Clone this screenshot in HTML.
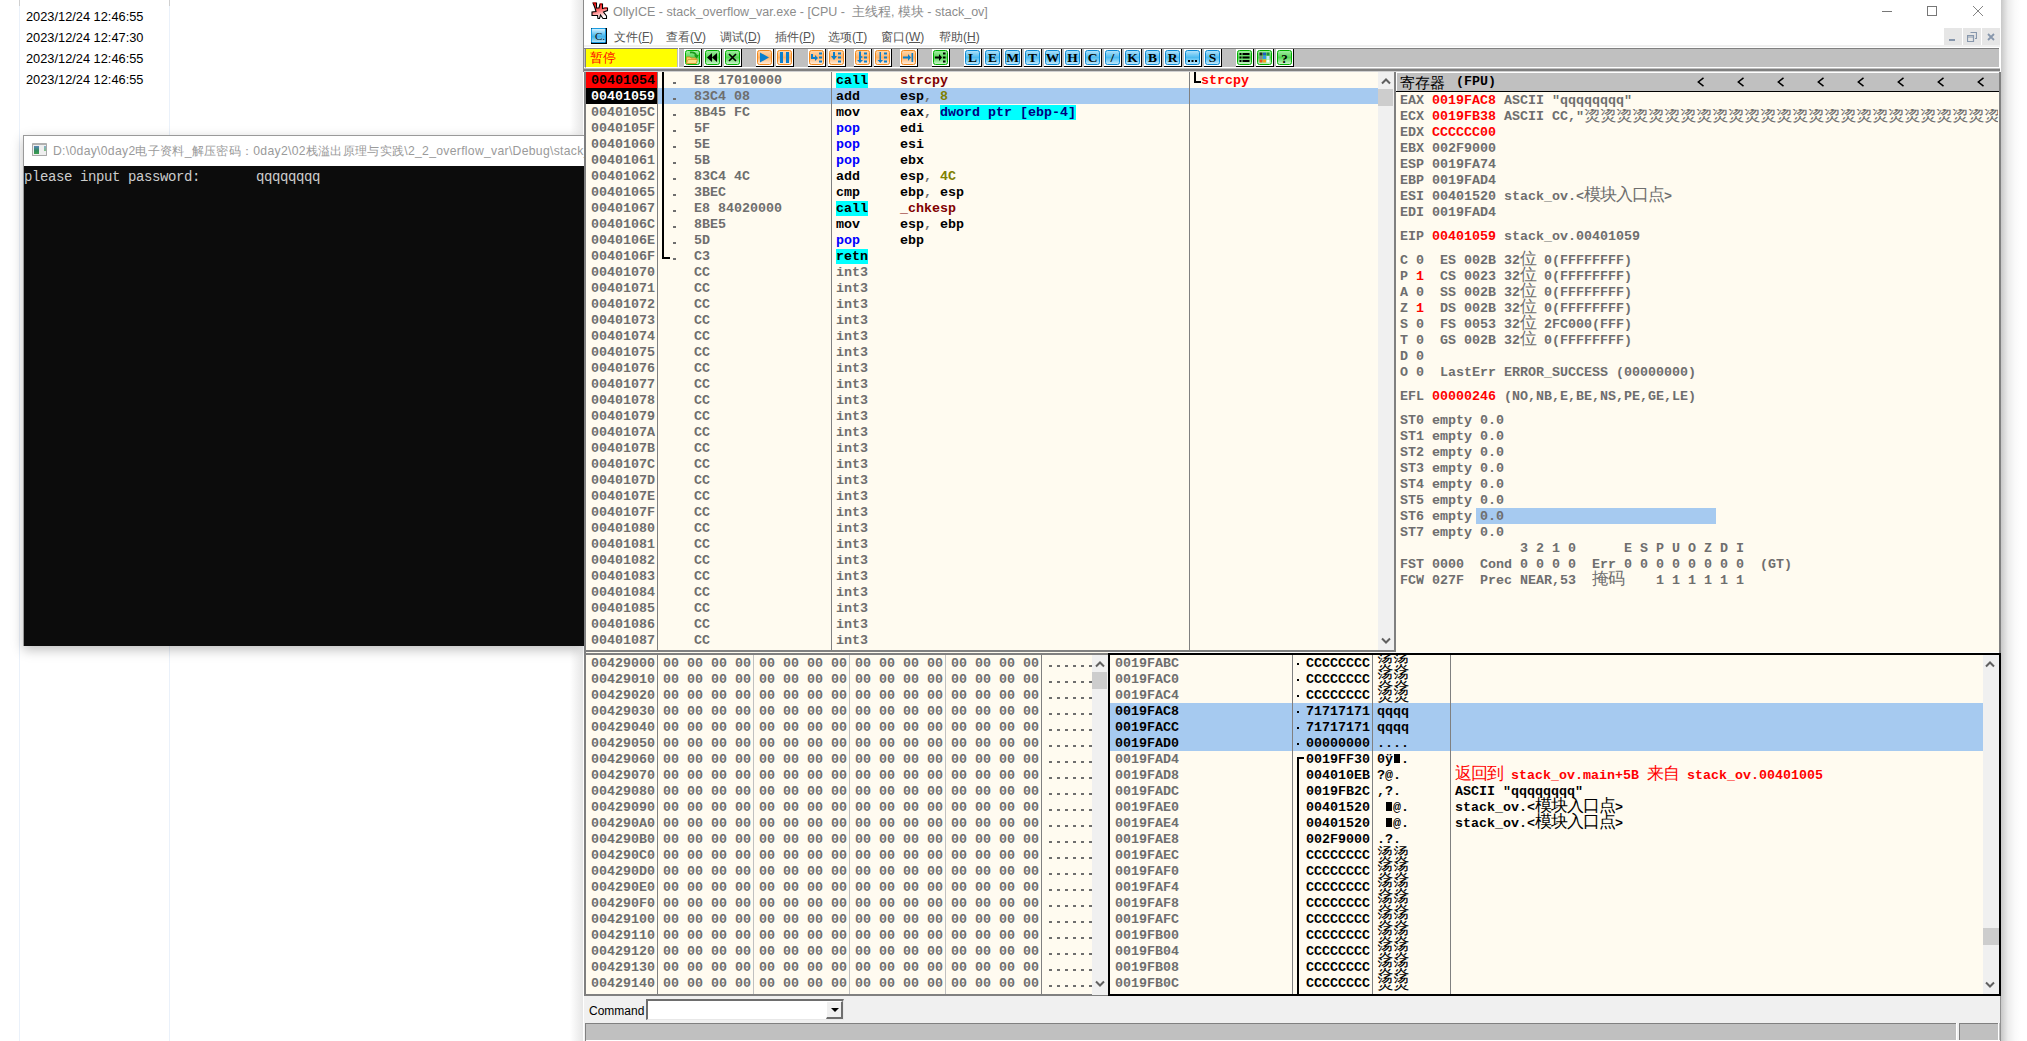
<!DOCTYPE html><html><head><meta charset="utf-8"><style>
html,body{margin:0;padding:0;}
body{width:2027px;height:1041px;position:relative;overflow:hidden;background:#fff;}
.r{position:absolute;}
.t{position:absolute;white-space:pre;line-height:16px;}
.m{font-family:'Liberation Mono',monospace;font-weight:bold;font-size:13.33px;line-height:16px;white-space:pre;}
.cj{font-weight:normal;font-family:'Liberation Sans',sans-serif;font-size:17px;letter-spacing:-1px;line-height:1px;}
</style></head><body>
<div class="r" style="left:19px;top:0px;width:1px;height:1041px;background:#EAF1FA;"></div><div class="r" style="left:19px;top:0px;width:1px;height:6px;background:#D0D0D0;"></div><div class="r" style="left:169px;top:0px;width:1px;height:1041px;background:#EAF1FA;"></div><div class="r" style="left:169px;top:0px;width:1px;height:6px;background:#D0D0D0;"></div><div class="t" style="left:26px;top:9px;font:12.8px 'Liberation Sans', sans-serif;line-height:16px;color:#000">2023/12/24 12:46:55</div><div class="t" style="left:26px;top:30px;font:12.8px 'Liberation Sans', sans-serif;line-height:16px;color:#000">2023/12/24 12:47:30</div><div class="t" style="left:26px;top:51px;font:12.8px 'Liberation Sans', sans-serif;line-height:16px;color:#000">2023/12/24 12:46:55</div><div class="t" style="left:26px;top:72px;font:12.8px 'Liberation Sans', sans-serif;line-height:16px;color:#000">2023/12/24 12:46:55</div><div class="r" style="left:23px;top:135px;width:561px;height:511px;background:#fff;box-shadow:0 4px 11px rgba(0,0,0,0.25);"></div><div class="r" style="left:23px;top:135px;width:561px;height:1px;background:#9a9a9a;"></div><div class="r" style="left:23px;top:135px;width:1px;height:511px;background:#9a9a9a;"></div><div class="r" style="left:32px;top:143px;width:15px;height:13px;background:#eeeeee;border:1px solid #a8a8a8;border-top:2px solid #b0b0b0;border-radius:1px;box-sizing:border-box;"></div><div class="r" style="left:34px;top:146px;width:5px;height:8px;background:linear-gradient(#5a86b8,#2f8a5a 60%,#3fa050)"></div><div class="r" style="left:44px;top:146px;width:2px;height:5px;background:linear-gradient(#8aaed0,#80c080)"></div><div class="t" style="left:53px;top:143px;font:12.2px 'Liberation Sans', sans-serif;letter-spacing:0.3px;line-height:16px;color:#9a9a9a">D:\0day\0day2电子资料_解压密码：0day2\02栈溢出原理与实践\2_2_overflow_var\Debug\stack_overflow_var.exe</div><div class="r" style="left:24px;top:166px;width:560px;height:480px;background:#0C0C0C;"></div><div class="t" style="left:24px;top:169px;font:normal 14px 'Liberation Mono', monospace;letter-spacing:-0.4px;line-height:16px;color:#CCCCCC">please input password:       qqqqqqqq</div><div class="r" style="left:2001px;top:0;width:20px;height:1041px;background:linear-gradient(90deg,#c8c8c8,#ececec 35%,#fafafa 70%,#fff)"></div><div class="r" style="left:570px;top:646px;width:13px;height:395px;background:linear-gradient(90deg,rgba(255,255,255,0),rgba(200,200,200,0.45))"></div><div class="r" style="left:570px;top:0px;width:13px;height:135px;background:linear-gradient(90deg,rgba(255,255,255,0),rgba(200,200,200,0.45))"></div><div class="r" style="left:584px;top:0px;width:1417px;height:1041px;background:#fff;"></div><div class="r" style="left:583px;top:0px;width:1px;height:72px;background:#8a8a8a;"></div><svg class="r" style="left:588px;top:0px" width="24" height="24" viewBox="0 0 24 24">
<defs><linearGradient id="rg" x1="0" y1="0" x2="0.3" y2="1"><stop offset="0" stop-color="#ff0000"/><stop offset="0.45" stop-color="#ff5050"/><stop offset="1" stop-color="#ffffff"/></linearGradient></defs>
<path d="M5 3 L8.5 3 L8.5 8 L11 8 L12 4 L14.5 4 L14.5 8.5 L16.5 8 L19.5 8 L19.5 10.5 L15.5 12 L18.5 16 L18.5 18.5 L15 18.5 L12.5 15 L11.5 18.5 L10 18.5 L9.5 15.5 L4 15.5 L4 12 L8 11.5 L7 8 Z" fill="url(#rg)" stroke="#000" stroke-width="1.1" stroke-linejoin="miter"/>
<path d="M5 3 L8 3 M12 4 L14 4 M16.5 8 L19 8" stroke="#ff0000" stroke-width="1.2"/>
</svg><div class="t" style="left:613px;top:4px;font:12.5px 'Liberation Sans', sans-serif;line-height:16px;color:#8c8c8c">OllyICE - stack_overflow_var.exe - [CPU -  主线程, 模块 - stack_ov]</div><div class="r" style="left:1882px;top:11px;width:10px;height:1px;background:#777;"></div><div class="r" style="left:1927px;top:6px;width:10px;height:10px;background:transparent;border:1px solid #777;box-sizing:border-box;"></div><svg class="r" style="left:1972px;top:5px" width="12" height="12"><path d="M1 1 L11 11 M11 1 L1 11" stroke="#858585" stroke-width="1"/></svg><div class="r" style="left:591px;top:28px;width:16px;height:16px;background:#000;"></div><div class="r" style="left:591px;top:28px;width:15px;height:15px;border-radius:1px;background:linear-gradient(#d0f0ff,#5cc0f0 45%,#41b3ea 60%,#b0e2f8);border:1px solid #1a9be0;box-sizing:border-box;"></div><div class="t" style="left:595px;top:28px;font:11px Liberation Serif;line-height:16px;color:#111">C.</div><div class="t" style="left:614px;top:29px;font:12px 'Liberation Sans', sans-serif;line-height:16px;color:#555">文件(<u>F</u>)</div><div class="t" style="left:666px;top:29px;font:12px 'Liberation Sans', sans-serif;line-height:16px;color:#555">查看(<u>V</u>)</div><div class="t" style="left:720px;top:29px;font:12px 'Liberation Sans', sans-serif;line-height:16px;color:#555">调试(<u>D</u>)</div><div class="t" style="left:775px;top:29px;font:12px 'Liberation Sans', sans-serif;line-height:16px;color:#555">插件(<u>P</u>)</div><div class="t" style="left:828px;top:29px;font:12px 'Liberation Sans', sans-serif;line-height:16px;color:#555">选项(<u>T</u>)</div><div class="t" style="left:881px;top:29px;font:12px 'Liberation Sans', sans-serif;line-height:16px;color:#555">窗口(<u>W</u>)</div><div class="t" style="left:939px;top:29px;font:12px 'Liberation Sans', sans-serif;line-height:16px;color:#555">帮助(<u>H</u>)</div><div class="r" style="left:1944px;top:28px;width:18px;height:18px;background:#E6E6E6;"></div><div class="r" style="left:1963px;top:28px;width:18px;height:18px;background:#E6E6E6;"></div><div class="r" style="left:1982px;top:28px;width:18px;height:18px;background:#E6E6E6;"></div><div class="r" style="left:1949px;top:39px;width:6px;height:2px;background:#8797AC;"></div><svg class="r" style="left:1967px;top:32px" width="10" height="10"><path d="M3.5 0.5 H9.5 V6.5 H8 M0.5 3.5 H6.5 V9.5 H0.5 Z M0.5 5 H6.5" stroke="#8797AC" stroke-width="1.2" fill="none"/></svg><svg class="r" style="left:1987px;top:33px" width="8" height="8"><path d="M1 1 L7 7 M7 1 L1 7" stroke="#8797AC" stroke-width="1.8"/></svg><div class="r" style="left:584px;top:45px;width:1416px;height:2px;background:#f0f0f0;"></div><div class="r" style="left:584px;top:47px;width:1416px;height:23px;background:#C0C0C0;"></div><div class="r" style="left:584px;top:47px;width:1416px;height:1px;background:#ffffff;"></div><div class="r" style="left:584px;top:48px;width:1416px;height:1px;background:#808080;"></div><div class="r" style="left:584px;top:67px;width:1416px;height:1px;background:#ffffff;"></div><div class="r" style="left:1999px;top:47px;width:1px;height:21px;background:#ffffff;"></div><div class="r" style="left:584px;top:69px;width:1416px;height:2px;background:#808080;"></div><div class="r" style="left:584px;top:71px;width:1416px;height:1px;background:#d0d0d0;"></div><div class="r" style="left:585px;top:48px;width:92px;height:20px;background:#FFFF00;border-top:1px solid #808080;border-left:1px solid #808080;border-bottom:1px solid #fff;box-sizing:border-box;"></div><div class="t" style="left:590px;top:49px;font:12.5px 'Liberation Sans', sans-serif;line-height:18px;color:#FF0000">暂停</div><div class="r" style="left:678px;top:48px;width:1px;height:20px;background:#ffffff;"></div><svg class="r" style="left:684px;top:49px" width="18" height="18" viewBox="0 0 18 18">
<defs><linearGradient id="g684" x1="0" y1="0" x2="0" y2="1"><stop offset="0" stop-color="#a8eea8"/><stop offset="0.5" stop-color="#55d455"/><stop offset="1" stop-color="#d2f6d2"/></linearGradient></defs>
<rect x="0" y="0" width="17" height="17" fill="#fff"/><rect x="17" y="0" width="1" height="18" fill="#000"/><rect x="0" y="17" width="18" height="1" fill="#000"/>
<rect x="1.5" y="1.5" width="14" height="14" rx="2" fill="url(#g684)" stroke="#00B000" stroke-width="1"/>
<path d="M2.5 8 H6 L7 9 H12 V14.5 H2.5 Z" fill="#f5cf6a" stroke="#c8901e" stroke-width="0.9"/><path d="M4 10.5 H13.5 L12 14.5 H2.5 Z" fill="#fbe08a" stroke="#c8901e" stroke-width="0.7"/><path d="M6 3.5 Q11 2.5 12.5 7" stroke="#1c9a1c" stroke-width="1.8" fill="none"/><path d="M10 6.5 L12.8 9.5 L15 5.8 Z" fill="#1c9a1c"/></svg><svg class="r" style="left:704px;top:49px" width="18" height="18" viewBox="0 0 18 18">
<defs><linearGradient id="g704" x1="0" y1="0" x2="0" y2="1"><stop offset="0" stop-color="#a8eea8"/><stop offset="0.5" stop-color="#55d455"/><stop offset="1" stop-color="#d2f6d2"/></linearGradient></defs>
<rect x="0" y="0" width="17" height="17" fill="#fff"/><rect x="17" y="0" width="1" height="18" fill="#000"/><rect x="0" y="17" width="18" height="1" fill="#000"/>
<rect x="1.5" y="1.5" width="14" height="14" rx="2" fill="url(#g704)" stroke="#00B000" stroke-width="1"/>
<path d="M3 8.5 L8 4 V13 Z M8 8.5 L13 4 V13 Z" fill="#000"/></svg><svg class="r" style="left:724px;top:49px" width="18" height="18" viewBox="0 0 18 18">
<defs><linearGradient id="g724" x1="0" y1="0" x2="0" y2="1"><stop offset="0" stop-color="#a8eea8"/><stop offset="0.5" stop-color="#55d455"/><stop offset="1" stop-color="#d2f6d2"/></linearGradient></defs>
<rect x="0" y="0" width="17" height="17" fill="#fff"/><rect x="17" y="0" width="1" height="18" fill="#000"/><rect x="0" y="17" width="18" height="1" fill="#000"/>
<rect x="1.5" y="1.5" width="14" height="14" rx="2" fill="url(#g724)" stroke="#00B000" stroke-width="1"/>
<path d="M5 5 L12 12 M12 5 L5 12" stroke="#000" stroke-width="1.7"/></svg><svg class="r" style="left:756px;top:49px" width="18" height="18" viewBox="0 0 18 18">
<defs><linearGradient id="g756" x1="0" y1="0" x2="0" y2="1"><stop offset="0" stop-color="#ffd9b0"/><stop offset="0.5" stop-color="#ffb46a"/><stop offset="1" stop-color="#fff0e2"/></linearGradient></defs>
<rect x="0" y="0" width="17" height="17" fill="#fff"/><rect x="17" y="0" width="1" height="18" fill="#000"/><rect x="0" y="17" width="18" height="1" fill="#000"/>
<rect x="1.5" y="1.5" width="14" height="14" rx="2" fill="url(#g756)" stroke="#F28A1E" stroke-width="1"/>
<path d="M4 3.5 L13 8.5 L4 13.5 Z" fill="#0a7fcc"/></svg><svg class="r" style="left:776px;top:49px" width="18" height="18" viewBox="0 0 18 18">
<defs><linearGradient id="g776" x1="0" y1="0" x2="0" y2="1"><stop offset="0" stop-color="#ffd9b0"/><stop offset="0.5" stop-color="#ffb46a"/><stop offset="1" stop-color="#fff0e2"/></linearGradient></defs>
<rect x="0" y="0" width="17" height="17" fill="#fff"/><rect x="17" y="0" width="1" height="18" fill="#000"/><rect x="0" y="17" width="18" height="1" fill="#000"/>
<rect x="1.5" y="1.5" width="14" height="14" rx="2" fill="url(#g776)" stroke="#F28A1E" stroke-width="1"/>
<rect x="4" y="3" width="3" height="11" fill="#0a7fcc"/><rect x="10" y="3" width="3" height="11" fill="#0a7fcc"/></svg><svg class="r" style="left:808px;top:49px" width="18" height="18" viewBox="0 0 18 18">
<defs><linearGradient id="g808" x1="0" y1="0" x2="0" y2="1"><stop offset="0" stop-color="#ffd9b0"/><stop offset="0.5" stop-color="#ffb46a"/><stop offset="1" stop-color="#fff0e2"/></linearGradient></defs>
<rect x="0" y="0" width="17" height="17" fill="#fff"/><rect x="17" y="0" width="1" height="18" fill="#000"/><rect x="0" y="17" width="18" height="1" fill="#000"/>
<rect x="1.5" y="1.5" width="14" height="14" rx="2" fill="url(#g808)" stroke="#F28A1E" stroke-width="1"/>
<path d="M3 5 H5 V8 H7 V6 L10 9 L7 12 V10 H3 Z" fill="#0a7fcc"/><rect x="11" y="3.5" width="3" height="2" fill="#0a7fcc"/><rect x="11" y="7.5" width="3" height="2" fill="#0a7fcc"/><rect x="11" y="11.5" width="3" height="2" fill="#0a7fcc"/></svg><svg class="r" style="left:828px;top:49px" width="18" height="18" viewBox="0 0 18 18">
<defs><linearGradient id="g828" x1="0" y1="0" x2="0" y2="1"><stop offset="0" stop-color="#ffd9b0"/><stop offset="0.5" stop-color="#ffb46a"/><stop offset="1" stop-color="#fff0e2"/></linearGradient></defs>
<rect x="0" y="0" width="17" height="17" fill="#fff"/><rect x="17" y="0" width="1" height="18" fill="#000"/><rect x="0" y="17" width="18" height="1" fill="#000"/>
<rect x="1.5" y="1.5" width="14" height="14" rx="2" fill="url(#g828)" stroke="#F28A1E" stroke-width="1"/>
<path d="M5 3 H7 V7 H9 L6 11 L3 7 H5 Z" fill="#0a7fcc"/><rect x="10" y="3.5" width="3" height="2" fill="#0a7fcc"/><rect x="10" y="7.5" width="3" height="2" fill="#0a7fcc"/><rect x="10" y="11.5" width="3" height="2" fill="#0a7fcc"/></svg><svg class="r" style="left:854px;top:49px" width="18" height="18" viewBox="0 0 18 18">
<defs><linearGradient id="g854" x1="0" y1="0" x2="0" y2="1"><stop offset="0" stop-color="#ffd9b0"/><stop offset="0.5" stop-color="#ffb46a"/><stop offset="1" stop-color="#fff0e2"/></linearGradient></defs>
<rect x="0" y="0" width="17" height="17" fill="#fff"/><rect x="17" y="0" width="1" height="18" fill="#000"/><rect x="0" y="17" width="18" height="1" fill="#000"/>
<rect x="1.5" y="1.5" width="14" height="14" rx="2" fill="url(#g854)" stroke="#F28A1E" stroke-width="1"/>
<path d="M5 2.5 H7 V7 L9 8 L7 9 V11 H9 L6 14 L3 11 H5 Z" fill="#0a7fcc"/><rect x="10" y="3.5" width="3" height="2" fill="#0a7fcc"/><rect x="10" y="7.5" width="3" height="2" fill="#0a7fcc"/><rect x="10" y="11.5" width="3" height="2" fill="#0a7fcc"/></svg><svg class="r" style="left:874px;top:49px" width="18" height="18" viewBox="0 0 18 18">
<defs><linearGradient id="g874" x1="0" y1="0" x2="0" y2="1"><stop offset="0" stop-color="#ffd9b0"/><stop offset="0.5" stop-color="#ffb46a"/><stop offset="1" stop-color="#fff0e2"/></linearGradient></defs>
<rect x="0" y="0" width="17" height="17" fill="#fff"/><rect x="17" y="0" width="1" height="18" fill="#000"/><rect x="0" y="17" width="18" height="1" fill="#000"/>
<rect x="1.5" y="1.5" width="14" height="14" rx="2" fill="url(#g874)" stroke="#F28A1E" stroke-width="1"/>
<path d="M5.5 3 H7 V11 H9 L6.25 14 L3.5 11 H5.5 Z" fill="#0a7fcc"/><rect x="10" y="3.5" width="3" height="2" fill="#0a7fcc"/><rect x="10" y="7.5" width="3" height="2" fill="#0a7fcc"/><rect x="10" y="11.5" width="3" height="2" fill="#0a7fcc"/></svg><svg class="r" style="left:900px;top:49px" width="18" height="18" viewBox="0 0 18 18">
<defs><linearGradient id="g900" x1="0" y1="0" x2="0" y2="1"><stop offset="0" stop-color="#ffd9b0"/><stop offset="0.5" stop-color="#ffb46a"/><stop offset="1" stop-color="#fff0e2"/></linearGradient></defs>
<rect x="0" y="0" width="17" height="17" fill="#fff"/><rect x="17" y="0" width="1" height="18" fill="#000"/><rect x="0" y="17" width="18" height="1" fill="#000"/>
<rect x="1.5" y="1.5" width="14" height="14" rx="2" fill="url(#g900)" stroke="#F28A1E" stroke-width="1"/>
<path d="M3 7.5 H8 V5 L11 8.5 L8 12 V9.5 H3 Z" fill="#0a7fcc"/><rect x="11.5" y="4" width="1.6" height="9" fill="#0a7fcc"/></svg><svg class="r" style="left:932px;top:49px" width="18" height="18" viewBox="0 0 18 18">
<defs><linearGradient id="g932" x1="0" y1="0" x2="0" y2="1"><stop offset="0" stop-color="#a8eea8"/><stop offset="0.5" stop-color="#55d455"/><stop offset="1" stop-color="#d2f6d2"/></linearGradient></defs>
<rect x="0" y="0" width="17" height="17" fill="#fff"/><rect x="17" y="0" width="1" height="18" fill="#000"/><rect x="0" y="17" width="18" height="1" fill="#000"/>
<rect x="1.5" y="1.5" width="14" height="14" rx="2" fill="url(#g932)" stroke="#00B000" stroke-width="1"/>
<path d="M3 7.5 H7 V5 L10 8.5 L7 12 V9.5 H3 Z" fill="#000"/><rect x="11" y="3.5" width="2.5" height="2" fill="#000"/><rect x="11" y="7.5" width="2.5" height="2" fill="#000"/><rect x="11" y="11.5" width="2.5" height="2" fill="#000"/></svg><svg class="r" style="left:1236px;top:49px" width="18" height="18" viewBox="0 0 18 18">
<defs><linearGradient id="g1236" x1="0" y1="0" x2="0" y2="1"><stop offset="0" stop-color="#a8eea8"/><stop offset="0.5" stop-color="#55d455"/><stop offset="1" stop-color="#d2f6d2"/></linearGradient></defs>
<rect x="0" y="0" width="17" height="17" fill="#fff"/><rect x="17" y="0" width="1" height="18" fill="#000"/><rect x="0" y="17" width="18" height="1" fill="#000"/>
<rect x="1.5" y="1.5" width="14" height="14" rx="2" fill="url(#g1236)" stroke="#00B000" stroke-width="1"/>
<rect x="3.5" y="4" width="2" height="2" fill="#000"/><rect x="6.5" y="4" width="7" height="2" fill="#000"/><rect x="3.5" y="7.5" width="2" height="2" fill="#000"/><rect x="6.5" y="7.5" width="7" height="2" fill="#000"/><rect x="3.5" y="11" width="2" height="2" fill="#000"/><rect x="6.5" y="11" width="7" height="2" fill="#000"/></svg><svg class="r" style="left:1256px;top:49px" width="18" height="18" viewBox="0 0 18 18">
<defs><linearGradient id="g1256" x1="0" y1="0" x2="0" y2="1"><stop offset="0" stop-color="#a8eea8"/><stop offset="0.5" stop-color="#55d455"/><stop offset="1" stop-color="#d2f6d2"/></linearGradient></defs>
<rect x="0" y="0" width="17" height="17" fill="#fff"/><rect x="17" y="0" width="1" height="18" fill="#000"/><rect x="0" y="17" width="18" height="1" fill="#000"/>
<rect x="1.5" y="1.5" width="14" height="14" rx="2" fill="url(#g1256)" stroke="#00B000" stroke-width="1"/>
<rect x="3.5" y="3.5" width="3" height="3" fill="#222"/><rect x="7" y="3.5" width="3" height="3" fill="#1c5fc0"/><rect x="10.5" y="3.5" width="3" height="3" fill="#1a8a3a"/><rect x="3.5" y="7" width="3" height="3" fill="#888"/><rect x="7" y="7" width="3" height="3" fill="#2a9be8"/><rect x="10.5" y="7" width="3" height="3" fill="#bfe4ff"/><rect x="3.5" y="10.5" width="3" height="3" fill="#e8501a"/><rect x="7" y="10.5" width="3" height="3" fill="#f5a21a"/><rect x="10.5" y="10.5" width="3" height="3" fill="#fff"/></svg><svg class="r" style="left:1276px;top:49px" width="18" height="18" viewBox="0 0 18 18">
<defs><linearGradient id="g1276" x1="0" y1="0" x2="0" y2="1"><stop offset="0" stop-color="#a8eea8"/><stop offset="0.5" stop-color="#55d455"/><stop offset="1" stop-color="#d2f6d2"/></linearGradient></defs>
<rect x="0" y="0" width="17" height="17" fill="#fff"/><rect x="17" y="0" width="1" height="18" fill="#000"/><rect x="0" y="17" width="18" height="1" fill="#000"/>
<rect x="1.5" y="1.5" width="14" height="14" rx="2" fill="url(#g1276)" stroke="#00B000" stroke-width="1"/>
<text x="8.5" y="13.5" text-anchor="middle" font-family="Liberation Serif" font-weight="bold" font-size="13" fill="#000">?</text></svg><svg class="r" style="left:964px;top:49px" width="18" height="18" viewBox="0 0 18 18">
<defs><linearGradient id="g964" x1="0" y1="0" x2="0" y2="1"><stop offset="0" stop-color="#b5e3fa"/><stop offset="0.5" stop-color="#4fbcf0"/><stop offset="1" stop-color="#c8ebfc"/></linearGradient></defs>
<rect x="0" y="0" width="17" height="17" fill="#fff"/><rect x="17" y="0" width="1" height="18" fill="#000"/><rect x="0" y="17" width="18" height="1" fill="#000"/>
<rect x="1.5" y="1.5" width="14" height="14" rx="2" fill="url(#g964)" stroke="#0a8ad6" stroke-width="1"/>
<text x="8.5" y="13.3" text-anchor="middle" font-family="Liberation Serif" font-weight="bold" font-size="13.5" fill="#000">L</text></svg><svg class="r" style="left:984px;top:49px" width="18" height="18" viewBox="0 0 18 18">
<defs><linearGradient id="g984" x1="0" y1="0" x2="0" y2="1"><stop offset="0" stop-color="#b5e3fa"/><stop offset="0.5" stop-color="#4fbcf0"/><stop offset="1" stop-color="#c8ebfc"/></linearGradient></defs>
<rect x="0" y="0" width="17" height="17" fill="#fff"/><rect x="17" y="0" width="1" height="18" fill="#000"/><rect x="0" y="17" width="18" height="1" fill="#000"/>
<rect x="1.5" y="1.5" width="14" height="14" rx="2" fill="url(#g984)" stroke="#0a8ad6" stroke-width="1"/>
<text x="8.5" y="13.3" text-anchor="middle" font-family="Liberation Serif" font-weight="bold" font-size="13.5" fill="#000">E</text></svg><svg class="r" style="left:1004px;top:49px" width="18" height="18" viewBox="0 0 18 18">
<defs><linearGradient id="g1004" x1="0" y1="0" x2="0" y2="1"><stop offset="0" stop-color="#b5e3fa"/><stop offset="0.5" stop-color="#4fbcf0"/><stop offset="1" stop-color="#c8ebfc"/></linearGradient></defs>
<rect x="0" y="0" width="17" height="17" fill="#fff"/><rect x="17" y="0" width="1" height="18" fill="#000"/><rect x="0" y="17" width="18" height="1" fill="#000"/>
<rect x="1.5" y="1.5" width="14" height="14" rx="2" fill="url(#g1004)" stroke="#0a8ad6" stroke-width="1"/>
<text x="8.5" y="13.3" text-anchor="middle" font-family="Liberation Serif" font-weight="bold" font-size="13.5" fill="#000">M</text></svg><svg class="r" style="left:1024px;top:49px" width="18" height="18" viewBox="0 0 18 18">
<defs><linearGradient id="g1024" x1="0" y1="0" x2="0" y2="1"><stop offset="0" stop-color="#b5e3fa"/><stop offset="0.5" stop-color="#4fbcf0"/><stop offset="1" stop-color="#c8ebfc"/></linearGradient></defs>
<rect x="0" y="0" width="17" height="17" fill="#fff"/><rect x="17" y="0" width="1" height="18" fill="#000"/><rect x="0" y="17" width="18" height="1" fill="#000"/>
<rect x="1.5" y="1.5" width="14" height="14" rx="2" fill="url(#g1024)" stroke="#0a8ad6" stroke-width="1"/>
<text x="8.5" y="13.3" text-anchor="middle" font-family="Liberation Serif" font-weight="bold" font-size="13.5" fill="#000">T</text></svg><svg class="r" style="left:1044px;top:49px" width="18" height="18" viewBox="0 0 18 18">
<defs><linearGradient id="g1044" x1="0" y1="0" x2="0" y2="1"><stop offset="0" stop-color="#b5e3fa"/><stop offset="0.5" stop-color="#4fbcf0"/><stop offset="1" stop-color="#c8ebfc"/></linearGradient></defs>
<rect x="0" y="0" width="17" height="17" fill="#fff"/><rect x="17" y="0" width="1" height="18" fill="#000"/><rect x="0" y="17" width="18" height="1" fill="#000"/>
<rect x="1.5" y="1.5" width="14" height="14" rx="2" fill="url(#g1044)" stroke="#0a8ad6" stroke-width="1"/>
<text x="8.5" y="13.3" text-anchor="middle" font-family="Liberation Serif" font-weight="bold" font-size="13.5" fill="#000">W</text></svg><svg class="r" style="left:1064px;top:49px" width="18" height="18" viewBox="0 0 18 18">
<defs><linearGradient id="g1064" x1="0" y1="0" x2="0" y2="1"><stop offset="0" stop-color="#b5e3fa"/><stop offset="0.5" stop-color="#4fbcf0"/><stop offset="1" stop-color="#c8ebfc"/></linearGradient></defs>
<rect x="0" y="0" width="17" height="17" fill="#fff"/><rect x="17" y="0" width="1" height="18" fill="#000"/><rect x="0" y="17" width="18" height="1" fill="#000"/>
<rect x="1.5" y="1.5" width="14" height="14" rx="2" fill="url(#g1064)" stroke="#0a8ad6" stroke-width="1"/>
<text x="8.5" y="13.3" text-anchor="middle" font-family="Liberation Serif" font-weight="bold" font-size="13.5" fill="#000">H</text></svg><svg class="r" style="left:1084px;top:49px" width="18" height="18" viewBox="0 0 18 18">
<defs><linearGradient id="g1084" x1="0" y1="0" x2="0" y2="1"><stop offset="0" stop-color="#b5e3fa"/><stop offset="0.5" stop-color="#4fbcf0"/><stop offset="1" stop-color="#c8ebfc"/></linearGradient></defs>
<rect x="0" y="0" width="17" height="17" fill="#fff"/><rect x="17" y="0" width="1" height="18" fill="#000"/><rect x="0" y="17" width="18" height="1" fill="#000"/>
<rect x="1.5" y="1.5" width="14" height="14" rx="2" fill="url(#g1084)" stroke="#0a8ad6" stroke-width="1"/>
<text x="8.5" y="13.3" text-anchor="middle" font-family="Liberation Serif" font-weight="bold" font-size="13.5" fill="#000">C</text></svg><svg class="r" style="left:1104px;top:49px" width="18" height="18" viewBox="0 0 18 18">
<defs><linearGradient id="g1104" x1="0" y1="0" x2="0" y2="1"><stop offset="0" stop-color="#b5e3fa"/><stop offset="0.5" stop-color="#4fbcf0"/><stop offset="1" stop-color="#c8ebfc"/></linearGradient></defs>
<rect x="0" y="0" width="17" height="17" fill="#fff"/><rect x="17" y="0" width="1" height="18" fill="#000"/><rect x="0" y="17" width="18" height="1" fill="#000"/>
<rect x="1.5" y="1.5" width="14" height="14" rx="2" fill="url(#g1104)" stroke="#0a8ad6" stroke-width="1"/>
<text x="8.5" y="13.3" text-anchor="middle" font-family="Liberation Serif" font-weight="bold" font-size="13.5" fill="#000">/</text></svg><svg class="r" style="left:1124px;top:49px" width="18" height="18" viewBox="0 0 18 18">
<defs><linearGradient id="g1124" x1="0" y1="0" x2="0" y2="1"><stop offset="0" stop-color="#b5e3fa"/><stop offset="0.5" stop-color="#4fbcf0"/><stop offset="1" stop-color="#c8ebfc"/></linearGradient></defs>
<rect x="0" y="0" width="17" height="17" fill="#fff"/><rect x="17" y="0" width="1" height="18" fill="#000"/><rect x="0" y="17" width="18" height="1" fill="#000"/>
<rect x="1.5" y="1.5" width="14" height="14" rx="2" fill="url(#g1124)" stroke="#0a8ad6" stroke-width="1"/>
<text x="8.5" y="13.3" text-anchor="middle" font-family="Liberation Serif" font-weight="bold" font-size="13.5" fill="#000">K</text></svg><svg class="r" style="left:1144px;top:49px" width="18" height="18" viewBox="0 0 18 18">
<defs><linearGradient id="g1144" x1="0" y1="0" x2="0" y2="1"><stop offset="0" stop-color="#b5e3fa"/><stop offset="0.5" stop-color="#4fbcf0"/><stop offset="1" stop-color="#c8ebfc"/></linearGradient></defs>
<rect x="0" y="0" width="17" height="17" fill="#fff"/><rect x="17" y="0" width="1" height="18" fill="#000"/><rect x="0" y="17" width="18" height="1" fill="#000"/>
<rect x="1.5" y="1.5" width="14" height="14" rx="2" fill="url(#g1144)" stroke="#0a8ad6" stroke-width="1"/>
<text x="8.5" y="13.3" text-anchor="middle" font-family="Liberation Serif" font-weight="bold" font-size="13.5" fill="#000">B</text></svg><svg class="r" style="left:1164px;top:49px" width="18" height="18" viewBox="0 0 18 18">
<defs><linearGradient id="g1164" x1="0" y1="0" x2="0" y2="1"><stop offset="0" stop-color="#b5e3fa"/><stop offset="0.5" stop-color="#4fbcf0"/><stop offset="1" stop-color="#c8ebfc"/></linearGradient></defs>
<rect x="0" y="0" width="17" height="17" fill="#fff"/><rect x="17" y="0" width="1" height="18" fill="#000"/><rect x="0" y="17" width="18" height="1" fill="#000"/>
<rect x="1.5" y="1.5" width="14" height="14" rx="2" fill="url(#g1164)" stroke="#0a8ad6" stroke-width="1"/>
<text x="8.5" y="13.3" text-anchor="middle" font-family="Liberation Serif" font-weight="bold" font-size="13.5" fill="#000">R</text></svg><svg class="r" style="left:1184px;top:49px" width="18" height="18" viewBox="0 0 18 18">
<defs><linearGradient id="g1184" x1="0" y1="0" x2="0" y2="1"><stop offset="0" stop-color="#b5e3fa"/><stop offset="0.5" stop-color="#4fbcf0"/><stop offset="1" stop-color="#c8ebfc"/></linearGradient></defs>
<rect x="0" y="0" width="17" height="17" fill="#fff"/><rect x="17" y="0" width="1" height="18" fill="#000"/><rect x="0" y="17" width="18" height="1" fill="#000"/>
<rect x="1.5" y="1.5" width="14" height="14" rx="2" fill="url(#g1184)" stroke="#0a8ad6" stroke-width="1"/>
<rect x="4" y="11" width="2" height="2" fill="#000"/><rect x="7.5" y="11" width="2" height="2" fill="#000"/><rect x="11" y="11" width="2" height="2" fill="#000"/></svg><svg class="r" style="left:1204px;top:49px" width="18" height="18" viewBox="0 0 18 18">
<defs><linearGradient id="g1204" x1="0" y1="0" x2="0" y2="1"><stop offset="0" stop-color="#b5e3fa"/><stop offset="0.5" stop-color="#4fbcf0"/><stop offset="1" stop-color="#c8ebfc"/></linearGradient></defs>
<rect x="0" y="0" width="17" height="17" fill="#fff"/><rect x="17" y="0" width="1" height="18" fill="#000"/><rect x="0" y="17" width="18" height="1" fill="#000"/>
<rect x="1.5" y="1.5" width="14" height="14" rx="2" fill="url(#g1204)" stroke="#0a8ad6" stroke-width="1"/>
<text x="8.5" y="13.3" text-anchor="middle" font-family="Liberation Serif" font-weight="bold" font-size="13.5" fill="#000">S</text></svg><div class="r" style="left:584px;top:72px;width:2px;height:580px;background:#808080;"></div><div class="r" style="left:586px;top:72px;width:792px;height:578px;background:#FFFBF0;"></div><div class="r" style="left:586px;top:650px;width:809px;height:2px;background:#808080;"></div><div class="r" style="left:1378px;top:72px;width:16px;height:578px;background:#F0F0F0;"></div><div class="r" style="left:1378px;top:89px;width:15px;height:17px;background:#CDCDCD;"></div><svg class="r" style="left:1380px;top:76px" width="12" height="10"><path d="M2 7.5 L6 3.5 L10 7.5" stroke="#606060" stroke-width="2" fill="none"/></svg><svg class="r" style="left:1380px;top:636px" width="12" height="10"><path d="M2 2.5 L6 6.5 L10 2.5" stroke="#606060" stroke-width="2" fill="none"/></svg><div class="r" style="left:1394px;top:72px;width:2px;height:580px;background:#808080;"></div><div class="r" style="left:586px;top:72px;width:71px;height:16px;background:#FF0000;"></div><div class="r" style="left:586px;top:88px;width:71px;height:16px;background:#000000;"></div><div class="r" style="left:658px;top:88px;width:720px;height:16px;background:#A6CAF0;"></div><div class="r" style="left:657px;top:72px;width:1px;height:578px;background:#808080;"></div><div class="r" style="left:831px;top:72px;width:1px;height:578px;background:#808080;"></div><div class="r" style="left:1189px;top:72px;width:1px;height:578px;background:#808080;"></div><div class="r" style="left:662px;top:72px;width:2px;height:187px;background:#000;"></div><div class="r" style="left:662px;top:257px;width:8px;height:2px;background:#000;"></div><div class="t m" style="left:591px;top:73px;color:#000">00401054</div><div class="r" style="left:673px;top:82px;width:3px;height:2px;background:#6e6e6e;"></div><div class="t m" style="left:670px;top:73px;color:#6e6e6e">   E8 17010000</div><div class="t m" style="left:836px;top:73px;color:#000"><span style="color:#000;background:#00FFFF;">call</span><span style="">    </span><span style="color:#800000;">strcpy</span></div><div class="t m" style="left:591px;top:89px;color:#FFFFFF">00401059</div><div class="r" style="left:673px;top:98px;width:3px;height:2px;background:#6e6e6e;"></div><div class="t m" style="left:670px;top:89px;color:#6e6e6e">   83C4 08</div><div class="t m" style="left:836px;top:89px;color:#000"><span style="color:#000;">add     </span><span style="color:#000;">esp</span><span style="color:#6e6e6e;">,</span><span style=""> </span><span style="color:#808000;">8</span></div><div class="t m" style="left:591px;top:105px;color:#6e6e6e">0040105C</div><div class="r" style="left:673px;top:114px;width:3px;height:2px;background:#6e6e6e;"></div><div class="t m" style="left:670px;top:105px;color:#6e6e6e">   8B45 FC</div><div class="t m" style="left:836px;top:105px;color:#000"><span style="color:#000;">mov     </span><span style="color:#000;">eax</span><span style="color:#6e6e6e;">,</span><span style=""> </span><span style="color:#000080;background:#00FFFF;">dword ptr [ebp-4]</span></div><div class="t m" style="left:591px;top:121px;color:#6e6e6e">0040105F</div><div class="r" style="left:673px;top:130px;width:3px;height:2px;background:#6e6e6e;"></div><div class="t m" style="left:670px;top:121px;color:#6e6e6e">   5F</div><div class="t m" style="left:836px;top:121px;color:#000"><span style="color:#0000FF;">pop</span><span style="color:#000;">     edi</span></div><div class="t m" style="left:591px;top:137px;color:#6e6e6e">00401060</div><div class="r" style="left:673px;top:146px;width:3px;height:2px;background:#6e6e6e;"></div><div class="t m" style="left:670px;top:137px;color:#6e6e6e">   5E</div><div class="t m" style="left:836px;top:137px;color:#000"><span style="color:#0000FF;">pop</span><span style="color:#000;">     esi</span></div><div class="t m" style="left:591px;top:153px;color:#6e6e6e">00401061</div><div class="r" style="left:673px;top:162px;width:3px;height:2px;background:#6e6e6e;"></div><div class="t m" style="left:670px;top:153px;color:#6e6e6e">   5B</div><div class="t m" style="left:836px;top:153px;color:#000"><span style="color:#0000FF;">pop</span><span style="color:#000;">     ebx</span></div><div class="t m" style="left:591px;top:169px;color:#6e6e6e">00401062</div><div class="r" style="left:673px;top:178px;width:3px;height:2px;background:#6e6e6e;"></div><div class="t m" style="left:670px;top:169px;color:#6e6e6e">   83C4 4C</div><div class="t m" style="left:836px;top:169px;color:#000"><span style="color:#000;">add     </span><span style="color:#000;">esp</span><span style="color:#6e6e6e;">,</span><span style=""> </span><span style="color:#808000;">4C</span></div><div class="t m" style="left:591px;top:185px;color:#6e6e6e">00401065</div><div class="r" style="left:673px;top:194px;width:3px;height:2px;background:#6e6e6e;"></div><div class="t m" style="left:670px;top:185px;color:#6e6e6e">   3BEC</div><div class="t m" style="left:836px;top:185px;color:#000"><span style="color:#000;">cmp     </span><span style="color:#000;">ebp</span><span style="color:#6e6e6e;">,</span><span style="color:#000;"> esp</span></div><div class="t m" style="left:591px;top:201px;color:#6e6e6e">00401067</div><div class="r" style="left:673px;top:210px;width:3px;height:2px;background:#6e6e6e;"></div><div class="t m" style="left:670px;top:201px;color:#6e6e6e">   E8 84020000</div><div class="t m" style="left:836px;top:201px;color:#000"><span style="color:#000;background:#00FFFF;">call</span><span style="">    </span><span style="color:#800000;">_chkesp</span></div><div class="t m" style="left:591px;top:217px;color:#6e6e6e">0040106C</div><div class="r" style="left:673px;top:226px;width:3px;height:2px;background:#6e6e6e;"></div><div class="t m" style="left:670px;top:217px;color:#6e6e6e">   8BE5</div><div class="t m" style="left:836px;top:217px;color:#000"><span style="color:#000;">mov     </span><span style="color:#000;">esp</span><span style="color:#6e6e6e;">,</span><span style="color:#000;"> ebp</span></div><div class="t m" style="left:591px;top:233px;color:#6e6e6e">0040106E</div><div class="r" style="left:673px;top:242px;width:3px;height:2px;background:#6e6e6e;"></div><div class="t m" style="left:670px;top:233px;color:#6e6e6e">   5D</div><div class="t m" style="left:836px;top:233px;color:#000"><span style="color:#0000FF;">pop</span><span style="color:#000;">     ebp</span></div><div class="t m" style="left:591px;top:249px;color:#6e6e6e">0040106F</div><div class="r" style="left:673px;top:258px;width:3px;height:2px;background:#6e6e6e;"></div><div class="t m" style="left:670px;top:249px;color:#6e6e6e">   C3</div><div class="t m" style="left:836px;top:249px;color:#000"><span style="color:#000;background:#00FFFF;">retn</span></div><div class="t m" style="left:591px;top:265px;color:#6e6e6e">00401070</div><div class="t m" style="left:670px;top:265px;color:#6e6e6e">   CC</div><div class="t m" style="left:836px;top:265px;color:#000"><span style="color:#6e6e6e;">int3</span></div><div class="t m" style="left:591px;top:281px;color:#6e6e6e">00401071</div><div class="t m" style="left:670px;top:281px;color:#6e6e6e">   CC</div><div class="t m" style="left:836px;top:281px;color:#000"><span style="color:#6e6e6e;">int3</span></div><div class="t m" style="left:591px;top:297px;color:#6e6e6e">00401072</div><div class="t m" style="left:670px;top:297px;color:#6e6e6e">   CC</div><div class="t m" style="left:836px;top:297px;color:#000"><span style="color:#6e6e6e;">int3</span></div><div class="t m" style="left:591px;top:313px;color:#6e6e6e">00401073</div><div class="t m" style="left:670px;top:313px;color:#6e6e6e">   CC</div><div class="t m" style="left:836px;top:313px;color:#000"><span style="color:#6e6e6e;">int3</span></div><div class="t m" style="left:591px;top:329px;color:#6e6e6e">00401074</div><div class="t m" style="left:670px;top:329px;color:#6e6e6e">   CC</div><div class="t m" style="left:836px;top:329px;color:#000"><span style="color:#6e6e6e;">int3</span></div><div class="t m" style="left:591px;top:345px;color:#6e6e6e">00401075</div><div class="t m" style="left:670px;top:345px;color:#6e6e6e">   CC</div><div class="t m" style="left:836px;top:345px;color:#000"><span style="color:#6e6e6e;">int3</span></div><div class="t m" style="left:591px;top:361px;color:#6e6e6e">00401076</div><div class="t m" style="left:670px;top:361px;color:#6e6e6e">   CC</div><div class="t m" style="left:836px;top:361px;color:#000"><span style="color:#6e6e6e;">int3</span></div><div class="t m" style="left:591px;top:377px;color:#6e6e6e">00401077</div><div class="t m" style="left:670px;top:377px;color:#6e6e6e">   CC</div><div class="t m" style="left:836px;top:377px;color:#000"><span style="color:#6e6e6e;">int3</span></div><div class="t m" style="left:591px;top:393px;color:#6e6e6e">00401078</div><div class="t m" style="left:670px;top:393px;color:#6e6e6e">   CC</div><div class="t m" style="left:836px;top:393px;color:#000"><span style="color:#6e6e6e;">int3</span></div><div class="t m" style="left:591px;top:409px;color:#6e6e6e">00401079</div><div class="t m" style="left:670px;top:409px;color:#6e6e6e">   CC</div><div class="t m" style="left:836px;top:409px;color:#000"><span style="color:#6e6e6e;">int3</span></div><div class="t m" style="left:591px;top:425px;color:#6e6e6e">0040107A</div><div class="t m" style="left:670px;top:425px;color:#6e6e6e">   CC</div><div class="t m" style="left:836px;top:425px;color:#000"><span style="color:#6e6e6e;">int3</span></div><div class="t m" style="left:591px;top:441px;color:#6e6e6e">0040107B</div><div class="t m" style="left:670px;top:441px;color:#6e6e6e">   CC</div><div class="t m" style="left:836px;top:441px;color:#000"><span style="color:#6e6e6e;">int3</span></div><div class="t m" style="left:591px;top:457px;color:#6e6e6e">0040107C</div><div class="t m" style="left:670px;top:457px;color:#6e6e6e">   CC</div><div class="t m" style="left:836px;top:457px;color:#000"><span style="color:#6e6e6e;">int3</span></div><div class="t m" style="left:591px;top:473px;color:#6e6e6e">0040107D</div><div class="t m" style="left:670px;top:473px;color:#6e6e6e">   CC</div><div class="t m" style="left:836px;top:473px;color:#000"><span style="color:#6e6e6e;">int3</span></div><div class="t m" style="left:591px;top:489px;color:#6e6e6e">0040107E</div><div class="t m" style="left:670px;top:489px;color:#6e6e6e">   CC</div><div class="t m" style="left:836px;top:489px;color:#000"><span style="color:#6e6e6e;">int3</span></div><div class="t m" style="left:591px;top:505px;color:#6e6e6e">0040107F</div><div class="t m" style="left:670px;top:505px;color:#6e6e6e">   CC</div><div class="t m" style="left:836px;top:505px;color:#000"><span style="color:#6e6e6e;">int3</span></div><div class="t m" style="left:591px;top:521px;color:#6e6e6e">00401080</div><div class="t m" style="left:670px;top:521px;color:#6e6e6e">   CC</div><div class="t m" style="left:836px;top:521px;color:#000"><span style="color:#6e6e6e;">int3</span></div><div class="t m" style="left:591px;top:537px;color:#6e6e6e">00401081</div><div class="t m" style="left:670px;top:537px;color:#6e6e6e">   CC</div><div class="t m" style="left:836px;top:537px;color:#000"><span style="color:#6e6e6e;">int3</span></div><div class="t m" style="left:591px;top:553px;color:#6e6e6e">00401082</div><div class="t m" style="left:670px;top:553px;color:#6e6e6e">   CC</div><div class="t m" style="left:836px;top:553px;color:#000"><span style="color:#6e6e6e;">int3</span></div><div class="t m" style="left:591px;top:569px;color:#6e6e6e">00401083</div><div class="t m" style="left:670px;top:569px;color:#6e6e6e">   CC</div><div class="t m" style="left:836px;top:569px;color:#000"><span style="color:#6e6e6e;">int3</span></div><div class="t m" style="left:591px;top:585px;color:#6e6e6e">00401084</div><div class="t m" style="left:670px;top:585px;color:#6e6e6e">   CC</div><div class="t m" style="left:836px;top:585px;color:#000"><span style="color:#6e6e6e;">int3</span></div><div class="t m" style="left:591px;top:601px;color:#6e6e6e">00401085</div><div class="t m" style="left:670px;top:601px;color:#6e6e6e">   CC</div><div class="t m" style="left:836px;top:601px;color:#000"><span style="color:#6e6e6e;">int3</span></div><div class="t m" style="left:591px;top:617px;color:#6e6e6e">00401086</div><div class="t m" style="left:670px;top:617px;color:#6e6e6e">   CC</div><div class="t m" style="left:836px;top:617px;color:#000"><span style="color:#6e6e6e;">int3</span></div><div class="t m" style="left:591px;top:633px;color:#6e6e6e">00401087</div><div class="t m" style="left:670px;top:633px;color:#6e6e6e">   CC</div><div class="t m" style="left:836px;top:633px;color:#000"><span style="color:#6e6e6e;">int3</span></div><div class="t m" style="left:1201px;top:73px;color:#000"><span style="color:#FF0000;">strcpy</span></div><div class="r" style="left:1194px;top:72px;width:2px;height:11px;background:#000;"></div><div class="r" style="left:1194px;top:81px;width:7px;height:2px;background:#000;"></div><div class="r" style="left:1396px;top:72px;width:605px;height:580px;background:#FFFBF0;"></div><div class="r" style="left:1999px;top:72px;width:2px;height:581px;background:#808080;"></div><div class="r" style="left:1396px;top:72px;width:603px;height:19px;background:#C0C0C0;"></div><div class="r" style="left:1396px;top:72px;width:603px;height:1px;background:#FFFFFF;"></div><div class="r" style="left:1396px;top:72px;width:1px;height:19px;background:#FFFFFF;"></div><div class="r" style="left:1396px;top:91px;width:603px;height:1px;background:#000000;"></div><div class="t" style="left:1400px;top:74px;font:normal 15px 'Liberation Sans', sans-serif;line-height:17px;color:#000">寄存器</div><div class="t m" style="left:1448px;top:74px;color:#000"> (FPU)</div><svg class="r" style="left:1697px;top:77px" width="8" height="10"><path d="M6.5 0.8 L1.3 5 L6.5 9.2" stroke="#000" stroke-width="1.5" fill="none"/></svg><svg class="r" style="left:1737px;top:77px" width="8" height="10"><path d="M6.5 0.8 L1.3 5 L6.5 9.2" stroke="#000" stroke-width="1.5" fill="none"/></svg><svg class="r" style="left:1777px;top:77px" width="8" height="10"><path d="M6.5 0.8 L1.3 5 L6.5 9.2" stroke="#000" stroke-width="1.5" fill="none"/></svg><svg class="r" style="left:1817px;top:77px" width="8" height="10"><path d="M6.5 0.8 L1.3 5 L6.5 9.2" stroke="#000" stroke-width="1.5" fill="none"/></svg><svg class="r" style="left:1857px;top:77px" width="8" height="10"><path d="M6.5 0.8 L1.3 5 L6.5 9.2" stroke="#000" stroke-width="1.5" fill="none"/></svg><svg class="r" style="left:1897px;top:77px" width="8" height="10"><path d="M6.5 0.8 L1.3 5 L6.5 9.2" stroke="#000" stroke-width="1.5" fill="none"/></svg><svg class="r" style="left:1937px;top:77px" width="8" height="10"><path d="M6.5 0.8 L1.3 5 L6.5 9.2" stroke="#000" stroke-width="1.5" fill="none"/></svg><svg class="r" style="left:1977px;top:77px" width="8" height="10"><path d="M6.5 0.8 L1.3 5 L6.5 9.2" stroke="#000" stroke-width="1.5" fill="none"/></svg><div class="t m" style="left:1400px;top:93px;color:#6e6e6e"><span style="">EAX </span><span style="color:#FF0000;">0019FAC8</span><span style=""> ASCII "qqqqqqqq"</span></div><div class="t m" style="left:1400px;top:109px;width:598px;overflow:hidden;color:#6e6e6e"><span style="">ECX </span><span style="color:#FF0000;">0019FB38</span><span style=""> ASCII CC,"</span><span class="cj" style="">烫烫烫烫烫烫烫烫烫烫烫烫烫烫烫烫烫烫烫烫烫烫烫烫烫烫烫烫烫烫</span></div><div class="t m" style="left:1400px;top:125px;color:#6e6e6e"><span style="">EDX </span><span style="color:#FF0000;">CCCCCC00</span></div><div class="t m" style="left:1400px;top:141px;color:#6e6e6e"><span style="">EBX 002F9000</span></div><div class="t m" style="left:1400px;top:157px;color:#6e6e6e"><span style="">ESP 0019FA74</span></div><div class="t m" style="left:1400px;top:173px;color:#6e6e6e"><span style="">EBP 0019FAD4</span></div><div class="t m" style="left:1400px;top:189px;color:#6e6e6e"><span style="">ESI 00401520 stack_ov.&lt;</span><span class="cj" style="">模块入口点</span><span style="">&gt;</span></div><div class="t m" style="left:1400px;top:205px;color:#6e6e6e"><span style="">EDI 0019FAD4</span></div><div class="t m" style="left:1400px;top:229px;color:#6e6e6e"><span style="">EIP </span><span style="color:#FF0000;">00401059</span><span style=""> stack_ov.00401059</span></div><div class="t m" style="left:1400px;top:253px;color:#6e6e6e"><span style="">C </span><span style="">0</span><span style="">  ES 002B 32</span><span class="cj" style="">位</span><span style=""> 0(FFFFFFFF)</span></div><div class="t m" style="left:1400px;top:269px;color:#6e6e6e"><span style="">P </span><span style="color:#FF0000;">1</span><span style="">  CS 0023 32</span><span class="cj" style="">位</span><span style=""> 0(FFFFFFFF)</span></div><div class="t m" style="left:1400px;top:285px;color:#6e6e6e"><span style="">A </span><span style="">0</span><span style="">  SS 002B 32</span><span class="cj" style="">位</span><span style=""> 0(FFFFFFFF)</span></div><div class="t m" style="left:1400px;top:301px;color:#6e6e6e"><span style="">Z </span><span style="color:#FF0000;">1</span><span style="">  DS 002B 32</span><span class="cj" style="">位</span><span style=""> 0(FFFFFFFF)</span></div><div class="t m" style="left:1400px;top:317px;color:#6e6e6e"><span style="">S </span><span style="">0</span><span style="">  FS 0053 32</span><span class="cj" style="">位</span><span style=""> 2FC000(FFF)</span></div><div class="t m" style="left:1400px;top:333px;color:#6e6e6e"><span style="">T </span><span style="">0</span><span style="">  GS 002B 32</span><span class="cj" style="">位</span><span style=""> 0(FFFFFFFF)</span></div><div class="t m" style="left:1400px;top:349px;color:#6e6e6e"><span style="">D 0</span></div><div class="t m" style="left:1400px;top:365px;color:#6e6e6e"><span style="">O 0  LastErr ERROR_SUCCESS (00000000)</span></div><div class="t m" style="left:1400px;top:389px;color:#6e6e6e"><span style="">EFL </span><span style="color:#FF0000;">00000246</span><span style=""> (NO,NB,E,BE,NS,PE,GE,LE)</span></div><div class="r" style="left:1476px;top:508px;width:240px;height:16px;background:#A6CAF0;"></div><div class="t m" style="left:1400px;top:413px;color:#6e6e6e"><span style="">ST0 empty 0.0</span></div><div class="t m" style="left:1400px;top:429px;color:#6e6e6e"><span style="">ST1 empty 0.0</span></div><div class="t m" style="left:1400px;top:445px;color:#6e6e6e"><span style="">ST2 empty 0.0</span></div><div class="t m" style="left:1400px;top:461px;color:#6e6e6e"><span style="">ST3 empty 0.0</span></div><div class="t m" style="left:1400px;top:477px;color:#6e6e6e"><span style="">ST4 empty 0.0</span></div><div class="t m" style="left:1400px;top:493px;color:#6e6e6e"><span style="">ST5 empty 0.0</span></div><div class="t m" style="left:1400px;top:509px;color:#6e6e6e"><span style="">ST6 empty 0.0</span></div><div class="t m" style="left:1400px;top:525px;color:#6e6e6e"><span style="">ST7 empty 0.0</span></div><div class="t m" style="left:1400px;top:541px;color:#6e6e6e"><span style="">               3 2 1 0      E S P U O Z D I</span></div><div class="t m" style="left:1400px;top:557px;color:#6e6e6e"><span style="">FST 0000  Cond 0 0 0 0  Err 0 0 0 0 0 0 0 0  (GT)</span></div><div class="t m" style="left:1400px;top:573px;color:#6e6e6e"><span style="">FCW 027F  Prec NEAR,53  </span><span class="cj" style="">掩码</span><span style="">    1 1 1 1 1 1</span></div><div class="r" style="left:584px;top:652px;width:2px;height:344px;background:#808080;"></div><div class="r" style="left:586px;top:652px;width:522px;height:2px;background:#FFFBF0;"></div><div class="r" style="left:586px;top:653px;width:522px;height:2px;background:#808080;"></div><div class="r" style="left:586px;top:655px;width:506px;height:340px;background:#FFFBF0;"></div><div class="r" style="left:1092px;top:655px;width:16px;height:340px;background:#F0F0F0;"></div><div class="r" style="left:1092px;top:672px;width:15px;height:17px;background:#CDCDCD;"></div><svg class="r" style="left:1094px;top:659px" width="12" height="10"><path d="M2 7.5 L6 3.5 L10 7.5" stroke="#606060" stroke-width="2" fill="none"/></svg><svg class="r" style="left:1094px;top:979px" width="12" height="10"><path d="M2 2.5 L6 6.5 L10 2.5" stroke="#606060" stroke-width="2" fill="none"/></svg><div class="r" style="left:586px;top:994px;width:522px;height:2px;background:#808080;"></div><div class="r" style="left:657px;top:655px;width:1px;height:339px;background:#808080;"></div><div class="r" style="left:753px;top:655px;width:1px;height:339px;background:#C0C0C0;"></div><div class="r" style="left:849px;top:655px;width:1px;height:339px;background:#C0C0C0;"></div><div class="r" style="left:945px;top:655px;width:1px;height:339px;background:#C0C0C0;"></div><div class="r" style="left:1041px;top:655px;width:1px;height:339px;background:#808080;"></div><div class="t m" style="left:591px;top:656px;color:#6e6e6e">00429000</div><div class="t m" style="left:663px;top:656px;color:#6e6e6e">00 00 00 00 00 00 00 00 00 00 00 00 00 00 00 00</div><div class="r" style="left:1049px;top:665px;width:3px;height:2px;background:#6e6e6e;"></div><div class="r" style="left:1057px;top:665px;width:3px;height:2px;background:#6e6e6e;"></div><div class="r" style="left:1065px;top:665px;width:3px;height:2px;background:#6e6e6e;"></div><div class="r" style="left:1073px;top:665px;width:3px;height:2px;background:#6e6e6e;"></div><div class="r" style="left:1081px;top:665px;width:3px;height:2px;background:#6e6e6e;"></div><div class="r" style="left:1089px;top:665px;width:3px;height:2px;background:#6e6e6e;"></div><div class="t m" style="left:591px;top:672px;color:#6e6e6e">00429010</div><div class="t m" style="left:663px;top:672px;color:#6e6e6e">00 00 00 00 00 00 00 00 00 00 00 00 00 00 00 00</div><div class="r" style="left:1049px;top:681px;width:3px;height:2px;background:#6e6e6e;"></div><div class="r" style="left:1057px;top:681px;width:3px;height:2px;background:#6e6e6e;"></div><div class="r" style="left:1065px;top:681px;width:3px;height:2px;background:#6e6e6e;"></div><div class="r" style="left:1073px;top:681px;width:3px;height:2px;background:#6e6e6e;"></div><div class="r" style="left:1081px;top:681px;width:3px;height:2px;background:#6e6e6e;"></div><div class="r" style="left:1089px;top:681px;width:3px;height:2px;background:#6e6e6e;"></div><div class="t m" style="left:591px;top:688px;color:#6e6e6e">00429020</div><div class="t m" style="left:663px;top:688px;color:#6e6e6e">00 00 00 00 00 00 00 00 00 00 00 00 00 00 00 00</div><div class="r" style="left:1049px;top:697px;width:3px;height:2px;background:#6e6e6e;"></div><div class="r" style="left:1057px;top:697px;width:3px;height:2px;background:#6e6e6e;"></div><div class="r" style="left:1065px;top:697px;width:3px;height:2px;background:#6e6e6e;"></div><div class="r" style="left:1073px;top:697px;width:3px;height:2px;background:#6e6e6e;"></div><div class="r" style="left:1081px;top:697px;width:3px;height:2px;background:#6e6e6e;"></div><div class="r" style="left:1089px;top:697px;width:3px;height:2px;background:#6e6e6e;"></div><div class="t m" style="left:591px;top:704px;color:#6e6e6e">00429030</div><div class="t m" style="left:663px;top:704px;color:#6e6e6e">00 00 00 00 00 00 00 00 00 00 00 00 00 00 00 00</div><div class="r" style="left:1049px;top:713px;width:3px;height:2px;background:#6e6e6e;"></div><div class="r" style="left:1057px;top:713px;width:3px;height:2px;background:#6e6e6e;"></div><div class="r" style="left:1065px;top:713px;width:3px;height:2px;background:#6e6e6e;"></div><div class="r" style="left:1073px;top:713px;width:3px;height:2px;background:#6e6e6e;"></div><div class="r" style="left:1081px;top:713px;width:3px;height:2px;background:#6e6e6e;"></div><div class="r" style="left:1089px;top:713px;width:3px;height:2px;background:#6e6e6e;"></div><div class="t m" style="left:591px;top:720px;color:#6e6e6e">00429040</div><div class="t m" style="left:663px;top:720px;color:#6e6e6e">00 00 00 00 00 00 00 00 00 00 00 00 00 00 00 00</div><div class="r" style="left:1049px;top:729px;width:3px;height:2px;background:#6e6e6e;"></div><div class="r" style="left:1057px;top:729px;width:3px;height:2px;background:#6e6e6e;"></div><div class="r" style="left:1065px;top:729px;width:3px;height:2px;background:#6e6e6e;"></div><div class="r" style="left:1073px;top:729px;width:3px;height:2px;background:#6e6e6e;"></div><div class="r" style="left:1081px;top:729px;width:3px;height:2px;background:#6e6e6e;"></div><div class="r" style="left:1089px;top:729px;width:3px;height:2px;background:#6e6e6e;"></div><div class="t m" style="left:591px;top:736px;color:#6e6e6e">00429050</div><div class="t m" style="left:663px;top:736px;color:#6e6e6e">00 00 00 00 00 00 00 00 00 00 00 00 00 00 00 00</div><div class="r" style="left:1049px;top:745px;width:3px;height:2px;background:#6e6e6e;"></div><div class="r" style="left:1057px;top:745px;width:3px;height:2px;background:#6e6e6e;"></div><div class="r" style="left:1065px;top:745px;width:3px;height:2px;background:#6e6e6e;"></div><div class="r" style="left:1073px;top:745px;width:3px;height:2px;background:#6e6e6e;"></div><div class="r" style="left:1081px;top:745px;width:3px;height:2px;background:#6e6e6e;"></div><div class="r" style="left:1089px;top:745px;width:3px;height:2px;background:#6e6e6e;"></div><div class="t m" style="left:591px;top:752px;color:#6e6e6e">00429060</div><div class="t m" style="left:663px;top:752px;color:#6e6e6e">00 00 00 00 00 00 00 00 00 00 00 00 00 00 00 00</div><div class="r" style="left:1049px;top:761px;width:3px;height:2px;background:#6e6e6e;"></div><div class="r" style="left:1057px;top:761px;width:3px;height:2px;background:#6e6e6e;"></div><div class="r" style="left:1065px;top:761px;width:3px;height:2px;background:#6e6e6e;"></div><div class="r" style="left:1073px;top:761px;width:3px;height:2px;background:#6e6e6e;"></div><div class="r" style="left:1081px;top:761px;width:3px;height:2px;background:#6e6e6e;"></div><div class="r" style="left:1089px;top:761px;width:3px;height:2px;background:#6e6e6e;"></div><div class="t m" style="left:591px;top:768px;color:#6e6e6e">00429070</div><div class="t m" style="left:663px;top:768px;color:#6e6e6e">00 00 00 00 00 00 00 00 00 00 00 00 00 00 00 00</div><div class="r" style="left:1049px;top:777px;width:3px;height:2px;background:#6e6e6e;"></div><div class="r" style="left:1057px;top:777px;width:3px;height:2px;background:#6e6e6e;"></div><div class="r" style="left:1065px;top:777px;width:3px;height:2px;background:#6e6e6e;"></div><div class="r" style="left:1073px;top:777px;width:3px;height:2px;background:#6e6e6e;"></div><div class="r" style="left:1081px;top:777px;width:3px;height:2px;background:#6e6e6e;"></div><div class="r" style="left:1089px;top:777px;width:3px;height:2px;background:#6e6e6e;"></div><div class="t m" style="left:591px;top:784px;color:#6e6e6e">00429080</div><div class="t m" style="left:663px;top:784px;color:#6e6e6e">00 00 00 00 00 00 00 00 00 00 00 00 00 00 00 00</div><div class="r" style="left:1049px;top:793px;width:3px;height:2px;background:#6e6e6e;"></div><div class="r" style="left:1057px;top:793px;width:3px;height:2px;background:#6e6e6e;"></div><div class="r" style="left:1065px;top:793px;width:3px;height:2px;background:#6e6e6e;"></div><div class="r" style="left:1073px;top:793px;width:3px;height:2px;background:#6e6e6e;"></div><div class="r" style="left:1081px;top:793px;width:3px;height:2px;background:#6e6e6e;"></div><div class="r" style="left:1089px;top:793px;width:3px;height:2px;background:#6e6e6e;"></div><div class="t m" style="left:591px;top:800px;color:#6e6e6e">00429090</div><div class="t m" style="left:663px;top:800px;color:#6e6e6e">00 00 00 00 00 00 00 00 00 00 00 00 00 00 00 00</div><div class="r" style="left:1049px;top:809px;width:3px;height:2px;background:#6e6e6e;"></div><div class="r" style="left:1057px;top:809px;width:3px;height:2px;background:#6e6e6e;"></div><div class="r" style="left:1065px;top:809px;width:3px;height:2px;background:#6e6e6e;"></div><div class="r" style="left:1073px;top:809px;width:3px;height:2px;background:#6e6e6e;"></div><div class="r" style="left:1081px;top:809px;width:3px;height:2px;background:#6e6e6e;"></div><div class="r" style="left:1089px;top:809px;width:3px;height:2px;background:#6e6e6e;"></div><div class="t m" style="left:591px;top:816px;color:#6e6e6e">004290A0</div><div class="t m" style="left:663px;top:816px;color:#6e6e6e">00 00 00 00 00 00 00 00 00 00 00 00 00 00 00 00</div><div class="r" style="left:1049px;top:825px;width:3px;height:2px;background:#6e6e6e;"></div><div class="r" style="left:1057px;top:825px;width:3px;height:2px;background:#6e6e6e;"></div><div class="r" style="left:1065px;top:825px;width:3px;height:2px;background:#6e6e6e;"></div><div class="r" style="left:1073px;top:825px;width:3px;height:2px;background:#6e6e6e;"></div><div class="r" style="left:1081px;top:825px;width:3px;height:2px;background:#6e6e6e;"></div><div class="r" style="left:1089px;top:825px;width:3px;height:2px;background:#6e6e6e;"></div><div class="t m" style="left:591px;top:832px;color:#6e6e6e">004290B0</div><div class="t m" style="left:663px;top:832px;color:#6e6e6e">00 00 00 00 00 00 00 00 00 00 00 00 00 00 00 00</div><div class="r" style="left:1049px;top:841px;width:3px;height:2px;background:#6e6e6e;"></div><div class="r" style="left:1057px;top:841px;width:3px;height:2px;background:#6e6e6e;"></div><div class="r" style="left:1065px;top:841px;width:3px;height:2px;background:#6e6e6e;"></div><div class="r" style="left:1073px;top:841px;width:3px;height:2px;background:#6e6e6e;"></div><div class="r" style="left:1081px;top:841px;width:3px;height:2px;background:#6e6e6e;"></div><div class="r" style="left:1089px;top:841px;width:3px;height:2px;background:#6e6e6e;"></div><div class="t m" style="left:591px;top:848px;color:#6e6e6e">004290C0</div><div class="t m" style="left:663px;top:848px;color:#6e6e6e">00 00 00 00 00 00 00 00 00 00 00 00 00 00 00 00</div><div class="r" style="left:1049px;top:857px;width:3px;height:2px;background:#6e6e6e;"></div><div class="r" style="left:1057px;top:857px;width:3px;height:2px;background:#6e6e6e;"></div><div class="r" style="left:1065px;top:857px;width:3px;height:2px;background:#6e6e6e;"></div><div class="r" style="left:1073px;top:857px;width:3px;height:2px;background:#6e6e6e;"></div><div class="r" style="left:1081px;top:857px;width:3px;height:2px;background:#6e6e6e;"></div><div class="r" style="left:1089px;top:857px;width:3px;height:2px;background:#6e6e6e;"></div><div class="t m" style="left:591px;top:864px;color:#6e6e6e">004290D0</div><div class="t m" style="left:663px;top:864px;color:#6e6e6e">00 00 00 00 00 00 00 00 00 00 00 00 00 00 00 00</div><div class="r" style="left:1049px;top:873px;width:3px;height:2px;background:#6e6e6e;"></div><div class="r" style="left:1057px;top:873px;width:3px;height:2px;background:#6e6e6e;"></div><div class="r" style="left:1065px;top:873px;width:3px;height:2px;background:#6e6e6e;"></div><div class="r" style="left:1073px;top:873px;width:3px;height:2px;background:#6e6e6e;"></div><div class="r" style="left:1081px;top:873px;width:3px;height:2px;background:#6e6e6e;"></div><div class="r" style="left:1089px;top:873px;width:3px;height:2px;background:#6e6e6e;"></div><div class="t m" style="left:591px;top:880px;color:#6e6e6e">004290E0</div><div class="t m" style="left:663px;top:880px;color:#6e6e6e">00 00 00 00 00 00 00 00 00 00 00 00 00 00 00 00</div><div class="r" style="left:1049px;top:889px;width:3px;height:2px;background:#6e6e6e;"></div><div class="r" style="left:1057px;top:889px;width:3px;height:2px;background:#6e6e6e;"></div><div class="r" style="left:1065px;top:889px;width:3px;height:2px;background:#6e6e6e;"></div><div class="r" style="left:1073px;top:889px;width:3px;height:2px;background:#6e6e6e;"></div><div class="r" style="left:1081px;top:889px;width:3px;height:2px;background:#6e6e6e;"></div><div class="r" style="left:1089px;top:889px;width:3px;height:2px;background:#6e6e6e;"></div><div class="t m" style="left:591px;top:896px;color:#6e6e6e">004290F0</div><div class="t m" style="left:663px;top:896px;color:#6e6e6e">00 00 00 00 00 00 00 00 00 00 00 00 00 00 00 00</div><div class="r" style="left:1049px;top:905px;width:3px;height:2px;background:#6e6e6e;"></div><div class="r" style="left:1057px;top:905px;width:3px;height:2px;background:#6e6e6e;"></div><div class="r" style="left:1065px;top:905px;width:3px;height:2px;background:#6e6e6e;"></div><div class="r" style="left:1073px;top:905px;width:3px;height:2px;background:#6e6e6e;"></div><div class="r" style="left:1081px;top:905px;width:3px;height:2px;background:#6e6e6e;"></div><div class="r" style="left:1089px;top:905px;width:3px;height:2px;background:#6e6e6e;"></div><div class="t m" style="left:591px;top:912px;color:#6e6e6e">00429100</div><div class="t m" style="left:663px;top:912px;color:#6e6e6e">00 00 00 00 00 00 00 00 00 00 00 00 00 00 00 00</div><div class="r" style="left:1049px;top:921px;width:3px;height:2px;background:#6e6e6e;"></div><div class="r" style="left:1057px;top:921px;width:3px;height:2px;background:#6e6e6e;"></div><div class="r" style="left:1065px;top:921px;width:3px;height:2px;background:#6e6e6e;"></div><div class="r" style="left:1073px;top:921px;width:3px;height:2px;background:#6e6e6e;"></div><div class="r" style="left:1081px;top:921px;width:3px;height:2px;background:#6e6e6e;"></div><div class="r" style="left:1089px;top:921px;width:3px;height:2px;background:#6e6e6e;"></div><div class="t m" style="left:591px;top:928px;color:#6e6e6e">00429110</div><div class="t m" style="left:663px;top:928px;color:#6e6e6e">00 00 00 00 00 00 00 00 00 00 00 00 00 00 00 00</div><div class="r" style="left:1049px;top:937px;width:3px;height:2px;background:#6e6e6e;"></div><div class="r" style="left:1057px;top:937px;width:3px;height:2px;background:#6e6e6e;"></div><div class="r" style="left:1065px;top:937px;width:3px;height:2px;background:#6e6e6e;"></div><div class="r" style="left:1073px;top:937px;width:3px;height:2px;background:#6e6e6e;"></div><div class="r" style="left:1081px;top:937px;width:3px;height:2px;background:#6e6e6e;"></div><div class="r" style="left:1089px;top:937px;width:3px;height:2px;background:#6e6e6e;"></div><div class="t m" style="left:591px;top:944px;color:#6e6e6e">00429120</div><div class="t m" style="left:663px;top:944px;color:#6e6e6e">00 00 00 00 00 00 00 00 00 00 00 00 00 00 00 00</div><div class="r" style="left:1049px;top:953px;width:3px;height:2px;background:#6e6e6e;"></div><div class="r" style="left:1057px;top:953px;width:3px;height:2px;background:#6e6e6e;"></div><div class="r" style="left:1065px;top:953px;width:3px;height:2px;background:#6e6e6e;"></div><div class="r" style="left:1073px;top:953px;width:3px;height:2px;background:#6e6e6e;"></div><div class="r" style="left:1081px;top:953px;width:3px;height:2px;background:#6e6e6e;"></div><div class="r" style="left:1089px;top:953px;width:3px;height:2px;background:#6e6e6e;"></div><div class="t m" style="left:591px;top:960px;color:#6e6e6e">00429130</div><div class="t m" style="left:663px;top:960px;color:#6e6e6e">00 00 00 00 00 00 00 00 00 00 00 00 00 00 00 00</div><div class="r" style="left:1049px;top:969px;width:3px;height:2px;background:#6e6e6e;"></div><div class="r" style="left:1057px;top:969px;width:3px;height:2px;background:#6e6e6e;"></div><div class="r" style="left:1065px;top:969px;width:3px;height:2px;background:#6e6e6e;"></div><div class="r" style="left:1073px;top:969px;width:3px;height:2px;background:#6e6e6e;"></div><div class="r" style="left:1081px;top:969px;width:3px;height:2px;background:#6e6e6e;"></div><div class="r" style="left:1089px;top:969px;width:3px;height:2px;background:#6e6e6e;"></div><div class="t m" style="left:591px;top:976px;color:#6e6e6e">00429140</div><div class="t m" style="left:663px;top:976px;color:#6e6e6e">00 00 00 00 00 00 00 00 00 00 00 00 00 00 00 00</div><div class="r" style="left:1049px;top:985px;width:3px;height:2px;background:#6e6e6e;"></div><div class="r" style="left:1057px;top:985px;width:3px;height:2px;background:#6e6e6e;"></div><div class="r" style="left:1065px;top:985px;width:3px;height:2px;background:#6e6e6e;"></div><div class="r" style="left:1073px;top:985px;width:3px;height:2px;background:#6e6e6e;"></div><div class="r" style="left:1081px;top:985px;width:3px;height:2px;background:#6e6e6e;"></div><div class="r" style="left:1089px;top:985px;width:3px;height:2px;background:#6e6e6e;"></div><div class="r" style="left:1092px;top:655px;width:16px;height:340px;background:#F0F0F0;"></div><div class="r" style="left:1092px;top:672px;width:15px;height:17px;background:#CDCDCD;"></div><svg class="r" style="left:1094px;top:659px" width="12" height="10"><path d="M2 7.5 L6 3.5 L10 7.5" stroke="#606060" stroke-width="2" fill="none"/></svg><svg class="r" style="left:1094px;top:979px" width="12" height="10"><path d="M2 2.5 L6 6.5 L10 2.5" stroke="#606060" stroke-width="2" fill="none"/></svg><div class="r" style="left:1108px;top:653px;width:893px;height:343px;background:#000;"></div><div class="r" style="left:1110px;top:655px;width:873px;height:339px;background:#FFFBF0;"></div><div class="r" style="left:1983px;top:655px;width:16px;height:339px;background:#F0F0F0;"></div><div class="r" style="left:1983px;top:928px;width:16px;height:17px;background:#CDCDCD;"></div><svg class="r" style="left:1984px;top:659px" width="12" height="10"><path d="M2 7.5 L6 3.5 L10 7.5" stroke="#606060" stroke-width="2" fill="none"/></svg><svg class="r" style="left:1984px;top:980px" width="12" height="10"><path d="M2 2.5 L6 6.5 L10 2.5" stroke="#606060" stroke-width="2" fill="none"/></svg><div class="r" style="left:1110px;top:703px;width:873px;height:48px;background:#A6CAF0;"></div><div class="r" style="left:1292px;top:655px;width:1px;height:339px;background:#808080;"></div><div class="r" style="left:1372px;top:655px;width:1px;height:339px;background:#808080;"></div><div class="r" style="left:1450px;top:655px;width:1px;height:339px;background:#808080;"></div><div class="t m" style="left:1115px;top:656px;color:#6e6e6e">0019FABC</div><div class="r" style="left:1297px;top:663px;width:2px;height:2px;background:#000;"></div><div class="t m" style="left:1306px;top:656px;color:#000">CCCCCCCC</div><div class="t" style="left:1377px;top:655px;font:normal 17px Liberation Sans;letter-spacing:-1px;line-height:16px;color:#000">烫烫</div><div class="t m" style="left:1115px;top:672px;color:#6e6e6e">0019FAC0</div><div class="r" style="left:1297px;top:679px;width:2px;height:2px;background:#000;"></div><div class="t m" style="left:1306px;top:672px;color:#000">CCCCCCCC</div><div class="t" style="left:1377px;top:671px;font:normal 17px Liberation Sans;letter-spacing:-1px;line-height:16px;color:#000">烫烫</div><div class="t m" style="left:1115px;top:688px;color:#6e6e6e">0019FAC4</div><div class="r" style="left:1297px;top:695px;width:2px;height:2px;background:#000;"></div><div class="t m" style="left:1306px;top:688px;color:#000">CCCCCCCC</div><div class="t" style="left:1377px;top:687px;font:normal 17px Liberation Sans;letter-spacing:-1px;line-height:16px;color:#000">烫烫</div><div class="t m" style="left:1115px;top:704px;color:#000">0019FAC8</div><div class="r" style="left:1297px;top:711px;width:2px;height:2px;background:#000;"></div><div class="t m" style="left:1306px;top:704px;color:#000">71717171</div><div class="t m" style="left:1377px;top:704px;color:#000">qqqq</div><div class="t m" style="left:1115px;top:720px;color:#000">0019FACC</div><div class="r" style="left:1297px;top:727px;width:2px;height:2px;background:#000;"></div><div class="t m" style="left:1306px;top:720px;color:#000">71717171</div><div class="t m" style="left:1377px;top:720px;color:#000">qqqq</div><div class="t m" style="left:1115px;top:736px;color:#000">0019FAD0</div><div class="r" style="left:1297px;top:743px;width:2px;height:2px;background:#000;"></div><div class="t m" style="left:1306px;top:736px;color:#000">00000000</div><div class="t m" style="left:1377px;top:736px;color:#000">....</div><div class="t m" style="left:1115px;top:752px;color:#6e6e6e">0019FAD4</div><div class="t m" style="left:1306px;top:752px;color:#000">0019FF30</div><div class="t m" style="left:1377px;top:752px;color:#000">0ÿ .</div><div class="t m" style="left:1115px;top:768px;color:#6e6e6e">0019FAD8</div><div class="t m" style="left:1306px;top:768px;color:#000">004010EB</div><div class="t m" style="left:1377px;top:768px;color:#000">?@.</div><div class="t m" style="left:1455px;top:768px;color:#000"><span class="cj" style="color:#FF0000;">返回到</span><span style="color:#FF0000;"> stack_ov.main+5B </span><span class="cj" style="color:#FF0000;">来自</span><span style="color:#FF0000;"> stack_ov.00401005</span></div><div class="t m" style="left:1115px;top:784px;color:#6e6e6e">0019FADC</div><div class="t m" style="left:1306px;top:784px;color:#000">0019FB2C</div><div class="t m" style="left:1377px;top:784px;color:#000">,?.</div><div class="t m" style="left:1455px;top:784px;color:#000">ASCII "qqqqqqqq"</div><div class="t m" style="left:1115px;top:800px;color:#6e6e6e">0019FAE0</div><div class="t m" style="left:1306px;top:800px;color:#000">00401520</div><div class="t m" style="left:1377px;top:800px;color:#000">  @.</div><div class="t m" style="left:1455px;top:800px;color:#000">stack_ov.&lt;<span class="cj" style="">模块入口点</span>&gt;</div><div class="t m" style="left:1115px;top:816px;color:#6e6e6e">0019FAE4</div><div class="t m" style="left:1306px;top:816px;color:#000">00401520</div><div class="t m" style="left:1377px;top:816px;color:#000">  @.</div><div class="t m" style="left:1455px;top:816px;color:#000">stack_ov.&lt;<span class="cj" style="">模块入口点</span>&gt;</div><div class="t m" style="left:1115px;top:832px;color:#6e6e6e">0019FAE8</div><div class="t m" style="left:1306px;top:832px;color:#000">002F9000</div><div class="t m" style="left:1377px;top:832px;color:#000">.?.</div><div class="t m" style="left:1115px;top:848px;color:#6e6e6e">0019FAEC</div><div class="t m" style="left:1306px;top:848px;color:#000">CCCCCCCC</div><div class="t" style="left:1377px;top:847px;font:normal 17px Liberation Sans;letter-spacing:-1px;line-height:16px;color:#000">烫烫</div><div class="t m" style="left:1115px;top:864px;color:#6e6e6e">0019FAF0</div><div class="t m" style="left:1306px;top:864px;color:#000">CCCCCCCC</div><div class="t" style="left:1377px;top:863px;font:normal 17px Liberation Sans;letter-spacing:-1px;line-height:16px;color:#000">烫烫</div><div class="t m" style="left:1115px;top:880px;color:#6e6e6e">0019FAF4</div><div class="t m" style="left:1306px;top:880px;color:#000">CCCCCCCC</div><div class="t" style="left:1377px;top:879px;font:normal 17px Liberation Sans;letter-spacing:-1px;line-height:16px;color:#000">烫烫</div><div class="t m" style="left:1115px;top:896px;color:#6e6e6e">0019FAF8</div><div class="t m" style="left:1306px;top:896px;color:#000">CCCCCCCC</div><div class="t" style="left:1377px;top:895px;font:normal 17px Liberation Sans;letter-spacing:-1px;line-height:16px;color:#000">烫烫</div><div class="t m" style="left:1115px;top:912px;color:#6e6e6e">0019FAFC</div><div class="t m" style="left:1306px;top:912px;color:#000">CCCCCCCC</div><div class="t" style="left:1377px;top:911px;font:normal 17px Liberation Sans;letter-spacing:-1px;line-height:16px;color:#000">烫烫</div><div class="t m" style="left:1115px;top:928px;color:#6e6e6e">0019FB00</div><div class="t m" style="left:1306px;top:928px;color:#000">CCCCCCCC</div><div class="t" style="left:1377px;top:927px;font:normal 17px Liberation Sans;letter-spacing:-1px;line-height:16px;color:#000">烫烫</div><div class="t m" style="left:1115px;top:944px;color:#6e6e6e">0019FB04</div><div class="t m" style="left:1306px;top:944px;color:#000">CCCCCCCC</div><div class="t" style="left:1377px;top:943px;font:normal 17px Liberation Sans;letter-spacing:-1px;line-height:16px;color:#000">烫烫</div><div class="t m" style="left:1115px;top:960px;color:#6e6e6e">0019FB08</div><div class="t m" style="left:1306px;top:960px;color:#000">CCCCCCCC</div><div class="t" style="left:1377px;top:959px;font:normal 17px Liberation Sans;letter-spacing:-1px;line-height:16px;color:#000">烫烫</div><div class="t m" style="left:1115px;top:976px;color:#6e6e6e">0019FB0C</div><div class="t m" style="left:1306px;top:976px;color:#000">CCCCCCCC</div><div class="t" style="left:1377px;top:975px;font:normal 17px Liberation Sans;letter-spacing:-1px;line-height:16px;color:#000">烫烫</div><div class="r" style="left:1297px;top:757px;width:2px;height:237px;background:#000;"></div><div class="r" style="left:1394px;top:754px;width:6px;height:9px;background:#000;"></div><div class="r" style="left:1386px;top:802px;width:6px;height:9px;background:#000;"></div><div class="r" style="left:1386px;top:818px;width:6px;height:9px;background:#000;"></div><div class="r" style="left:1297px;top:757px;width:7px;height:2px;background:#000;"></div><div class="r" style="left:584px;top:996px;width:1417px;height:26px;background:#F0F0F0;"></div><div class="r" style="left:2000px;top:996px;width:1px;height:45px;background:#909090;"></div><div class="t" style="left:589px;top:1003px;font:12px 'Liberation Sans', sans-serif;line-height:16px;color:#000">Command</div><div class="r" style="left:646px;top:999px;width:198px;height:21px;background:#FFFFFF;border-top:2px solid #6e6e6e;border-left:2px solid #6e6e6e;border-right:1px solid #e8e8e8;border-bottom:1px solid #e8e8e8;box-sizing:border-box;"></div><div class="r" style="left:826px;top:1001px;width:17px;height:18px;background:#F0F0F0;border-left:1px solid #fff;border-top:1px solid #fff;border-right:2px solid #6e6e6e;border-bottom:2px solid #6e6e6e;box-sizing:border-box;"></div><svg class="r" style="left:830px;top:1007px" width="10" height="6"><path d="M1 1 H9 L5 5 Z" fill="#000"/></svg><div class="r" style="left:584px;top:1022px;width:1416px;height:19px;background:#F0F0F0;"></div><div class="r" style="left:586px;top:1023px;width:1414px;height:18px;background:#C0C0C0;"></div><div class="r" style="left:586px;top:1022px;width:1414px;height:1px;background:#F0F0F0;"></div><div class="r" style="left:586px;top:1023px;width:1371px;height:1px;background:#808080;"></div><div class="r" style="left:585px;top:1023px;width:1px;height:18px;background:#808080;"></div><div class="r" style="left:1957px;top:1023px;width:2px;height:18px;background:#F0F0F0;"></div><div class="r" style="left:1959px;top:1023px;width:40px;height:1px;background:#808080;"></div><div class="r" style="left:1959px;top:1023px;width:1px;height:18px;background:#808080;"></div><div class="r" style="left:1998px;top:1023px;width:1px;height:18px;background:#FFFFFF;"></div><div class="r" style="left:586px;top:1040px;width:1414px;height:1px;background:#FFFFFF;"></div><div class="r" style="left:1956px;top:1023px;width:1px;height:18px;background:#FFFFFF;"></div></body></html>
